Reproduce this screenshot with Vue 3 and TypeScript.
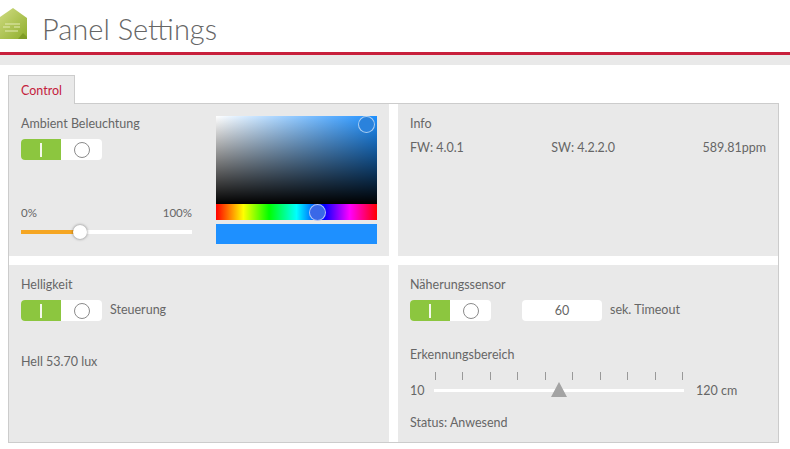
<script setup lang="ts">
const ticks: number[] = Array.from({ length: 10 }, (_, i) => i)
</script>

<template>
  <div class="page">
    <header class="head">
      <svg class="logo" width="28" height="40" viewBox="0 0 28 40">
        <defs>
          <linearGradient id="lg" x1="0" y1="0" x2="1" y2="1">
            <stop offset="0" stop-color="#d3de86" />
            <stop offset="1" stop-color="#8fae2c" />
          </linearGradient>
        </defs>
        <path d="M-3 19 L13 8 L27 18 L27 39 L-3 39 Z" fill="url(#lg)" />
        <path d="M5 24 H20 M3 27 H10 M14 27 H20 M5 31 H18" stroke="#e3ecb4" stroke-width="1.2" fill="none" />
        <path d="M18 39 L23 33 L27 37 V39 Z" fill="#7f9c26" />
      </svg>
      <h1 class="title">Panel Settings</h1>
    </header>
    <div class="strip"></div>
    <nav class="tabs"><div class="tab">Control</div></nav>
    <main class="panel">
      <section class="cell ambient">
        <div class="ambient-left">
          <div class="label">Ambient Beleuchtung</div>
          <div class="toggle"><span class="on"><i></i></span><span class="off"><b></b></span></div>
          <div class="range-labels"><span>0%</span><span>100%</span></div>
          <div class="slider">
            <div class="fill"></div>
            <div class="thumb"></div>
          </div>
        </div>
        <div class="picker">
          <div class="sat"><span class="handle sat-handle"></span></div>
          <div class="hue"><span class="handle hue-handle"></span></div>
          <div class="swatch"></div>
        </div>
      </section>
      <section class="cell">
        <div class="label">Info</div>
        <div class="info"><span>FW: 4.0.1</span><span>SW: 4.2.2.0</span><span>589.81ppm</span></div>
      </section>
      <section class="cell">
        <div class="label">Helligkeit</div>
        <div class="row">
          <div class="toggle"><span class="on"><i></i></span><span class="off"><b></b></span></div>
          <span class="side">Steuerung</span>
        </div>
        <div class="hell">Hell 53.70 lux</div>
      </section>
      <section class="cell">
        <div class="label">Näherungssensor</div>
        <div class="row">
          <div class="toggle"><span class="on"><i></i></span><span class="off"><b></b></span></div>
          <div class="num">60</div>
          <span class="timeout">sek. Timeout</span>
        </div>
        <div class="label area">Erkennungsbereich</div>
        <div class="ticks-row">
          <span v-for="t in ticks" :key="t" class="tick"></span>
        </div>
        <div class="range-row">
          <span class="lo">10</span>
          <div class="track"><span class="tri"></span></div>
          <span class="hi">120 cm</span>
        </div>
        <div class="status">Status: Anwesend</div>
      </section>
    </main>
  </div>
</template>

<style scoped>
.page {
  width: 790px;
  height: 449px;
  overflow: hidden;
  background: #fff;
  color: #666;
  font-family: Lato, "Open Sans", sans-serif;
  font-size: 12.5px;
  line-height: 16px;
}
.head {
  height: 52px;
  display: flex;
  align-items: flex-start;
  border-bottom: 3px solid #c8203c;
  box-sizing: content-box;
}
.logo { display: block; flex: none; }
.title {
  margin: 9px 0 0 14px;
  font-family: Lato, sans-serif;
  font-weight: 300;
  font-size: 29px;
  line-height: 40px;
  color: #666;
}
.strip { height: 10px; background: #e9e9e9; }
.tabs {
  padding: 10px 0 0 8px;
  height: 28px;
  box-sizing: content-box;
  display: flex;
}
.tab {
  width: 65px;
  height: 28px;
  box-sizing: content-box;
  background: #e9e9e9;
  border: 1px solid #ccc;
  border-bottom: 0;
  color: #c4203c;
  text-align: center;
  line-height: 29px;
}
.panel {
  width: 771px;
  height: 340px;
  margin-left: 8px;
  box-sizing: border-box;
  border: 1px solid #ccc;
  display: grid;
  grid-template-columns: 380px 380px;
  grid-template-rows: 152px 177px;
  column-gap: 9px;
  row-gap: 9px;
  background: #fff;
}
.cell {
  background: #e9e9e9;
  padding: 12px 12px 0 12px;
  box-sizing: border-box;
}
.label { height: 16px; }
.ambient { display: flex; }
.ambient-left { width: 171px; }
.toggle {
  display: flex;
  width: 81px;
  height: 21px;
  margin-top: 7px;
  border-radius: 4px;
  overflow: hidden;
  background: #fff;
  flex: none;
}
.on {
  width: 40px;
  background: #8cc63f;
  display: flex;
  align-items: center;
  justify-content: center;
}
.on i { display: block; width: 2px; height: 14px; background: #f4f8ec; }
.off {
  flex: 1;
  display: flex;
  align-items: center;
  justify-content: center;
}
.off b {
  display: block;
  width: 16px;
  height: 16px;
  box-sizing: border-box;
  border: 1px solid #8a8a8a;
  border-radius: 50%;
}
.range-labels {
  display: flex;
  justify-content: space-between;
  margin-top: 45px;
  font-size: 11.5px;
  height: 16px;
}
.slider {
  position: relative;
  height: 4px;
  margin-top: 9px;
  background: #fff;
}
.fill { width: 59px; height: 4px; background: #f5a623; }
.thumb {
  position: absolute;
  left: 52px;
  top: -5px;
  width: 14px;
  height: 14px;
  border-radius: 50%;
  background: #fff;
  box-shadow: 0 0 3px rgba(0, 0, 0, 0.5);
}
.picker { width: 161px; margin-left: 24px; }
.sat {
  position: relative;
  height: 88px;
  background:
    linear-gradient(to bottom, rgba(0, 0, 0, 0), #000),
    linear-gradient(to right, #fff, #1e90ff);
}
.hue {
  position: relative;
  height: 16px;
  background: linear-gradient(to right, #f00, #ff0 17%, #0f0 33%, #0ff 50%, #00f 67%, #f0f 83%, #f00);
}
.swatch { height: 20px; margin-top: 4px; background: #1e90ff; }
.handle {
  position: absolute;
  width: 17px;
  height: 17px;
  box-sizing: border-box;
  border: 1px solid rgba(255, 255, 255, 0.6);
  border-radius: 50%;
}
.sat-handle { left: 142px; top: 0; background: #2a82dc; }
.hue-handle { left: 93px; top: 0; background: #3a68e8; }
.info {
  display: flex;
  justify-content: space-between;
  margin-top: 8px;
}
.row { display: flex; align-items: center; }
.side { margin-left: 8px; margin-top: 5px; }
.num {
  width: 80px;
  height: 21px;
  margin: 7px 0 0 31px;
  background: #fff;
  border-radius: 4px;
  text-align: center;
  line-height: 22px;
}
.timeout { margin: 6px 0 0 8px; }
.hell { margin-top: 33px; }
.area { margin-top: 26px; }
.ticks-row {
  display: flex;
  justify-content: space-between;
  width: 248px;
  margin: 9px 0 0 25px;
  height: 8px;
}
.tick { width: 1px; height: 8px; background: #999; }
.range-row { display: flex; align-items: center; margin-top: 2px; height: 16px; }
.lo { width: 24px; margin-top: 2px; }
.track { position: relative; width: 250px; height: 3px; background: #fff; }
.tri {
  position: absolute;
  left: 117px;
  top: -7px;
  width: 0;
  height: 0;
  border-left: 8px solid transparent;
  border-right: 8px solid transparent;
  border-bottom: 15px solid #a3a3a3;
}
.hi { margin-left: 12px; margin-top: 2px; }
.status { margin-top: 17px; }
</style>

<style>
html, body { margin: 0; background: #fff; }
</style>
